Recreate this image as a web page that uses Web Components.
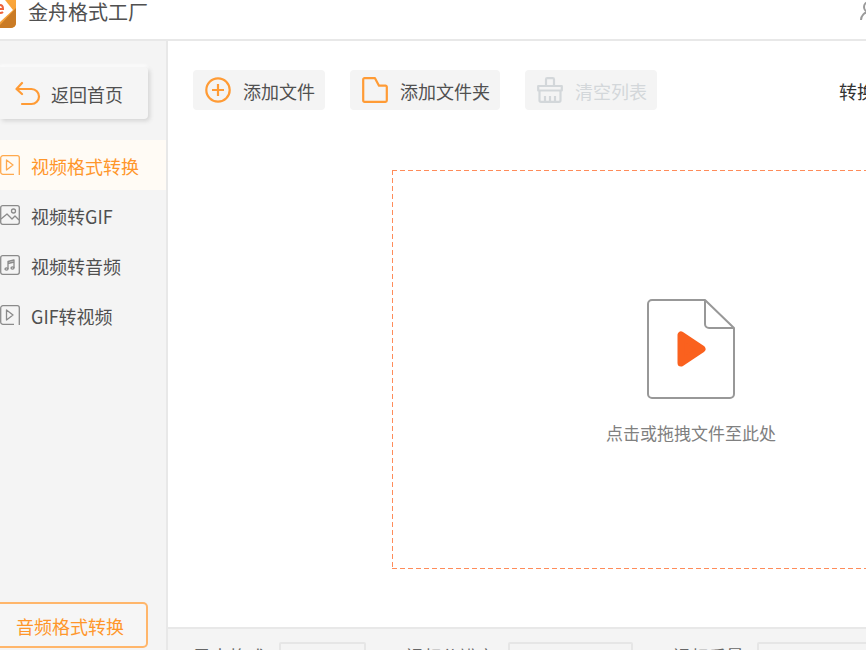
<!DOCTYPE html>
<html lang="zh-CN">
<head>
<meta charset="utf-8">
<title>金舟格式工厂</title>
<style>
  body {
    margin: 0;
    font-family: "Noto Sans CJK SC", "Noto Sans", sans-serif;
    font-size: 18px;
    line-height: 24px;
    color: #505050;
    overflow: hidden;
  }
</style>
</head>
<body>
<format-app></format-app>

<script>
const base = `
  *, *::before, *::after { box-sizing: border-box; }
  svg { display: block; flex: none; }
  .icon { fill: none; stroke: currentColor; }
  button { font: inherit; color: inherit; border: 0; margin: 0; white-space: nowrap; cursor: pointer; }
`;
const icon = (size, width, shapes) =>
  `<svg class="icon" width="${size}" height="${size}" viewBox="0 0 ${size} ${size}" stroke-width="${width}" stroke-linejoin="round" aria-hidden="true">${shapes}</svg>`;
const icons = {
  back: icon(26, 2.2, '<path stroke-linecap="round" d="M7 2 1.500 8 7 13M2 8h14.500a7.500 7.500 0 0 1 0 15H7"/>'),
  video: icon(20, 1.3, '<path d="M14 19.300H3a2.300 2.300 0 0 1-2.300-2.300V3A2.300 2.300 0 0 1 3 .7h14.300a2 2 0 0 1 2 2V20M6.500 5v10l6.500-5z"/>'),
  image: icon(20, 1.3, '<rect x=".7" y=".7" width="18.600" height="18.600" rx="2"/><circle cx="13.500" cy="6" r="2"/><path d="M1 14l6-5 5 5 3-3 4 4"/>'),
  music: icon(20, 1.3, '<rect x=".7" y=".7" width="18.600" height="18.600" rx="2"/><path d="M8 14V6.500l6-1.500v8M8 8.500 14 7"/><ellipse cx="6.500" cy="14" rx="1.500" ry="1.100"/><ellipse cx="12.500" cy="13" rx="1.500" ry="1.100"/>'),
  plus: icon(26, 2.2, '<circle cx="13" cy="13" r="11.700"/><path d="M13 7v12M7 13h12"/>'),
  folder: icon(26, 2.2, '<path d="M2.600 1.200H13l4 7.500h6.500a1.300 1.300 0 0 1 1.300 1.300v13.500a1.300 1.300 0 0 1-1.300 1.300h-21a1.300 1.300 0 0 1-1.300-1.300v-21a1.300 1.300 0 0 1 1.400-1.300z"/>'),
  broom: icon(26, 2.2, '<path d="M9 9V2.500a1.300 1.300 0 0 1 1.300-1.300h5.400A1.300 1.300 0 0 1 17 2.500V9M1.200 9h23.600v4.500H1.200zM2.500 13.500v9.800a1.500 1.500 0 0 0 1.500 1.500h18a1.500 1.500 0 0 0 1.500-1.500v-9.800M8 19v5.500M13 19v5.500M18 19v5.500"/>')
};

function define(name, markup) {
  customElements.define(name, class extends HTMLElement {
    connectedCallback() {
      if (this.shadowRoot) return;
      const html = typeof markup === 'function' ? markup(this) : markup;
      this.attachShadow({ mode: 'open' }).innerHTML = `<style>${base}</style>${html}`;
    }
  });
}

define('title-bar', `
  <style>
    :host { display: block; overflow: hidden; border-bottom: 2px solid #e8e8e8; background: #fff; }
    header { height: 39px; display: flex; align-items: flex-start; }
    .logo { margin-right: 12px; }
    h1 { margin: 0; font-size: 20px; font-weight: 400; line-height: 24px; flex: 1; white-space: nowrap; }
    .user { color: #9a9a9a; margin-right: -16px; }
  </style>
  <header>
    <svg class="logo" width="16" height="28" viewBox="0 0 16 28" role="img" aria-label="logo">
      <defs><linearGradient id="g" x1="0" y1="0" x2="0" y2="1"><stop stop-color="#fba63a"/><stop offset="1" stop-color="#ef9c38"/></linearGradient></defs>
      <path d="M0 0h16v23a5 5 0 0 1-5 5H0z" fill="url(#g)"/>
      <path d="M16 8v15a5 5 0 0 1-5 5H0v-3z" fill="#ca7b25"/>
      <path d="M0 0h5l8 10L0 22z" fill="#fff"/>
      <path d="M0 9h3q0-4-3-4M0 13q2 0 3-1" fill="none" stroke="#ee633b" stroke-width="2"/>
    </svg>
    <h1>金舟格式工厂</h1>
    <svg class="icon user" width="22" height="22" viewBox="0 0 22 22" stroke-width="2" role="img" aria-label="user"><circle cx="9" cy="7" r="5"/><path d="M1 20a8 8 0 0 1 16 0"/></svg>
  </header>`);

define('nav-item', el => `
  <style>
    :host { display: block; }
    button { display: flex; align-items: center; gap: 11px; width: 100%; height: 50px; padding: 0; background: none; text-align: left; }
    :host([active]) button { background: #fffbf5; color: #ff962b; }
    svg { color: #8a8a8a; }
    :host([active]) svg { color: #ffa94d; }
    span { padding-top: 1px; }
  </style>
  <button type="button">${icons[el.getAttribute('icon')]}<span><slot></slot></span></button>`);

define('side-bar', `
  <style>
    :host { display: flex; flex-direction: column; background: #f4f4f4; border-right: 2px solid #e8e8e8; }
    .back { display: flex; align-items: center; gap: 10px; height: 52px; margin: 26px 18px 21px 0; padding: 1px 0 0 15px; background: #f5f5f5; border-radius: 0 4px 4px 0; box-shadow: 2px 2px 4px #d4d4d4, 0 -2px 3px #fff; }
    .back svg { color: #ff9b35; }
    nav { flex: 1; }
    .switch { height: 46px; margin: 0 18px 2px 0; padding: 2px 0 0 16px; text-align: left; color: #ff962b; background: #f6f6f6; border: 2px solid #ffb66b; border-left: 0; border-radius: 0 5px 5px 0; }
  </style>
  <button class="back" type="button">${icons.back}<span>返回首页</span></button>
  <nav>
    <nav-item icon="video" active>视频格式转换</nav-item>
    <nav-item icon="image">视频转GIF</nav-item>
    <nav-item icon="music">视频转音频</nav-item>
    <nav-item icon="video">GIF转视频</nav-item>
  </nav>
  <button class="switch" type="button">音频格式转换</button>`);

define('tool-button', el => `
  <style>
    :host { display: block; flex: none; }
    button { display: flex; align-items: center; gap: 12px; height: 40px; padding: 0 10px 0 12px; background: #f4f4f4; border-radius: 4px; }
    svg { color: #ff9b35; }
    span { padding-top: 2px; }
    button:disabled, button:disabled svg { color: #d3d7da; }
  </style>
  <button type="button" ${el.hasAttribute('disabled') ? 'disabled' : ''}>${icons[el.getAttribute('icon')]}<span><slot></slot></span></button>`);

define('tool-bar', `
  <style>
    :host { display: flex; align-items: center; gap: 25px; padding: 29px 0 0 25px; overflow: hidden; }
    .state { flex: none; margin-left: 157px; padding-top: 2px; white-space: nowrap; color: #333; }
  </style>
  <tool-button icon="plus">添加文件</tool-button>
  <tool-button icon="folder">添加文件夹</tool-button>
  <tool-button icon="broom" disabled>清空列表</tool-button>
  <span class="state">转换</span>`);

define('drop-zone', `
  <style>
    :host {
      display: flex; flex: 1; padding: 60px 0 58px 224px; overflow: hidden;
      --across: repeating-linear-gradient(90deg, #ff8c5a 0 5px, transparent 5px 8px);
      --down: repeating-linear-gradient(#ff8c5a 0 5px, transparent 5px 8px);
    }
    button {
      flex: none; width: 598px; display: flex; flex-direction: column; align-items: center; justify-content: center; gap: 22px;
      padding: 4px 0 0; font-size: 17px; color: #808080;
      background: var(--across) top / 100% 1px no-repeat, var(--across) bottom / 100% 1px no-repeat,
        var(--down) left / 1px 100% no-repeat, var(--down) right / 1px 100% no-repeat;
    }
    .sheet { fill: none; stroke: #989898; stroke-width: 2; }
    .fold { stroke-width: 1; }
    .play { fill: #fa611e; stroke: #fa611e; stroke-width: 7; }
  </style>
  <button type="button">
    <svg width="88" height="100" viewBox="0 0 88 100" stroke-linejoin="round" aria-hidden="true">
      <path class="sheet" d="M58 1H5a4 4 0 0 0-4 4v90a4 4 0 0 0 4 4h78a4 4 0 0 0 4-4V29H62a4 4 0 0 1-4-4V1l29 28"/>
      <path class="play" d="M34 36v28l21-14z"/>
    </svg>
    <span>点击或拖拽文件至此处</span>
  </button>`);

define('option-field', el => `
  <style>
    :host { display: block; flex: none; }
    label { display: flex; align-items: flex-start; }
    span { flex: none; width: var(--label); padding-top: 2px; white-space: nowrap; color: #666; }
    select { appearance: none; width: var(--field); height: 34px; padding: 0 16px; font: inherit; color: #999; background: #f4f4f4; border: 2px solid #e6e6e6; border-radius: 2px; }
  </style>
  <label><span>${el.getAttribute('label')}</span><select><option>${el.getAttribute('value')}</option></select></label>`);

define('output-bar', `
  <style>
    :host { display: flex; height: 23px; padding: 13px 0 0 25px; gap: 39px; overflow: hidden; background: #f4f4f4; border-top: 2px solid #e8e8e8; }
    .format { --label: 86px; --field: 87px; }
    .resolution { --label: 103px; --field: 125px; }
    .quality { --label: 85px; --field: 125px; }
  </style>
  <option-field class="format" label="导出格式" value="MP4"></option-field>
  <option-field class="resolution" label="视频分辨率" value="默认"></option-field>
  <option-field class="quality" label="视频质量" value="默认"></option-field>`);

define('format-app', `
  <style>
    :host { display: grid; grid-template-columns: 168px minmax(0, 1fr); grid-template-rows: auto minmax(0, 1fr); height: 100vh; background: #fff; }
    title-bar { grid-column: 1 / -1; }
    main { display: flex; flex-direction: column; min-width: 0; }
  </style>
  <title-bar></title-bar>
  <side-bar></side-bar>
  <main>
    <tool-bar></tool-bar>
    <drop-zone></drop-zone>
    <output-bar></output-bar>
  </main>`);
</script>
</body>
</html>
